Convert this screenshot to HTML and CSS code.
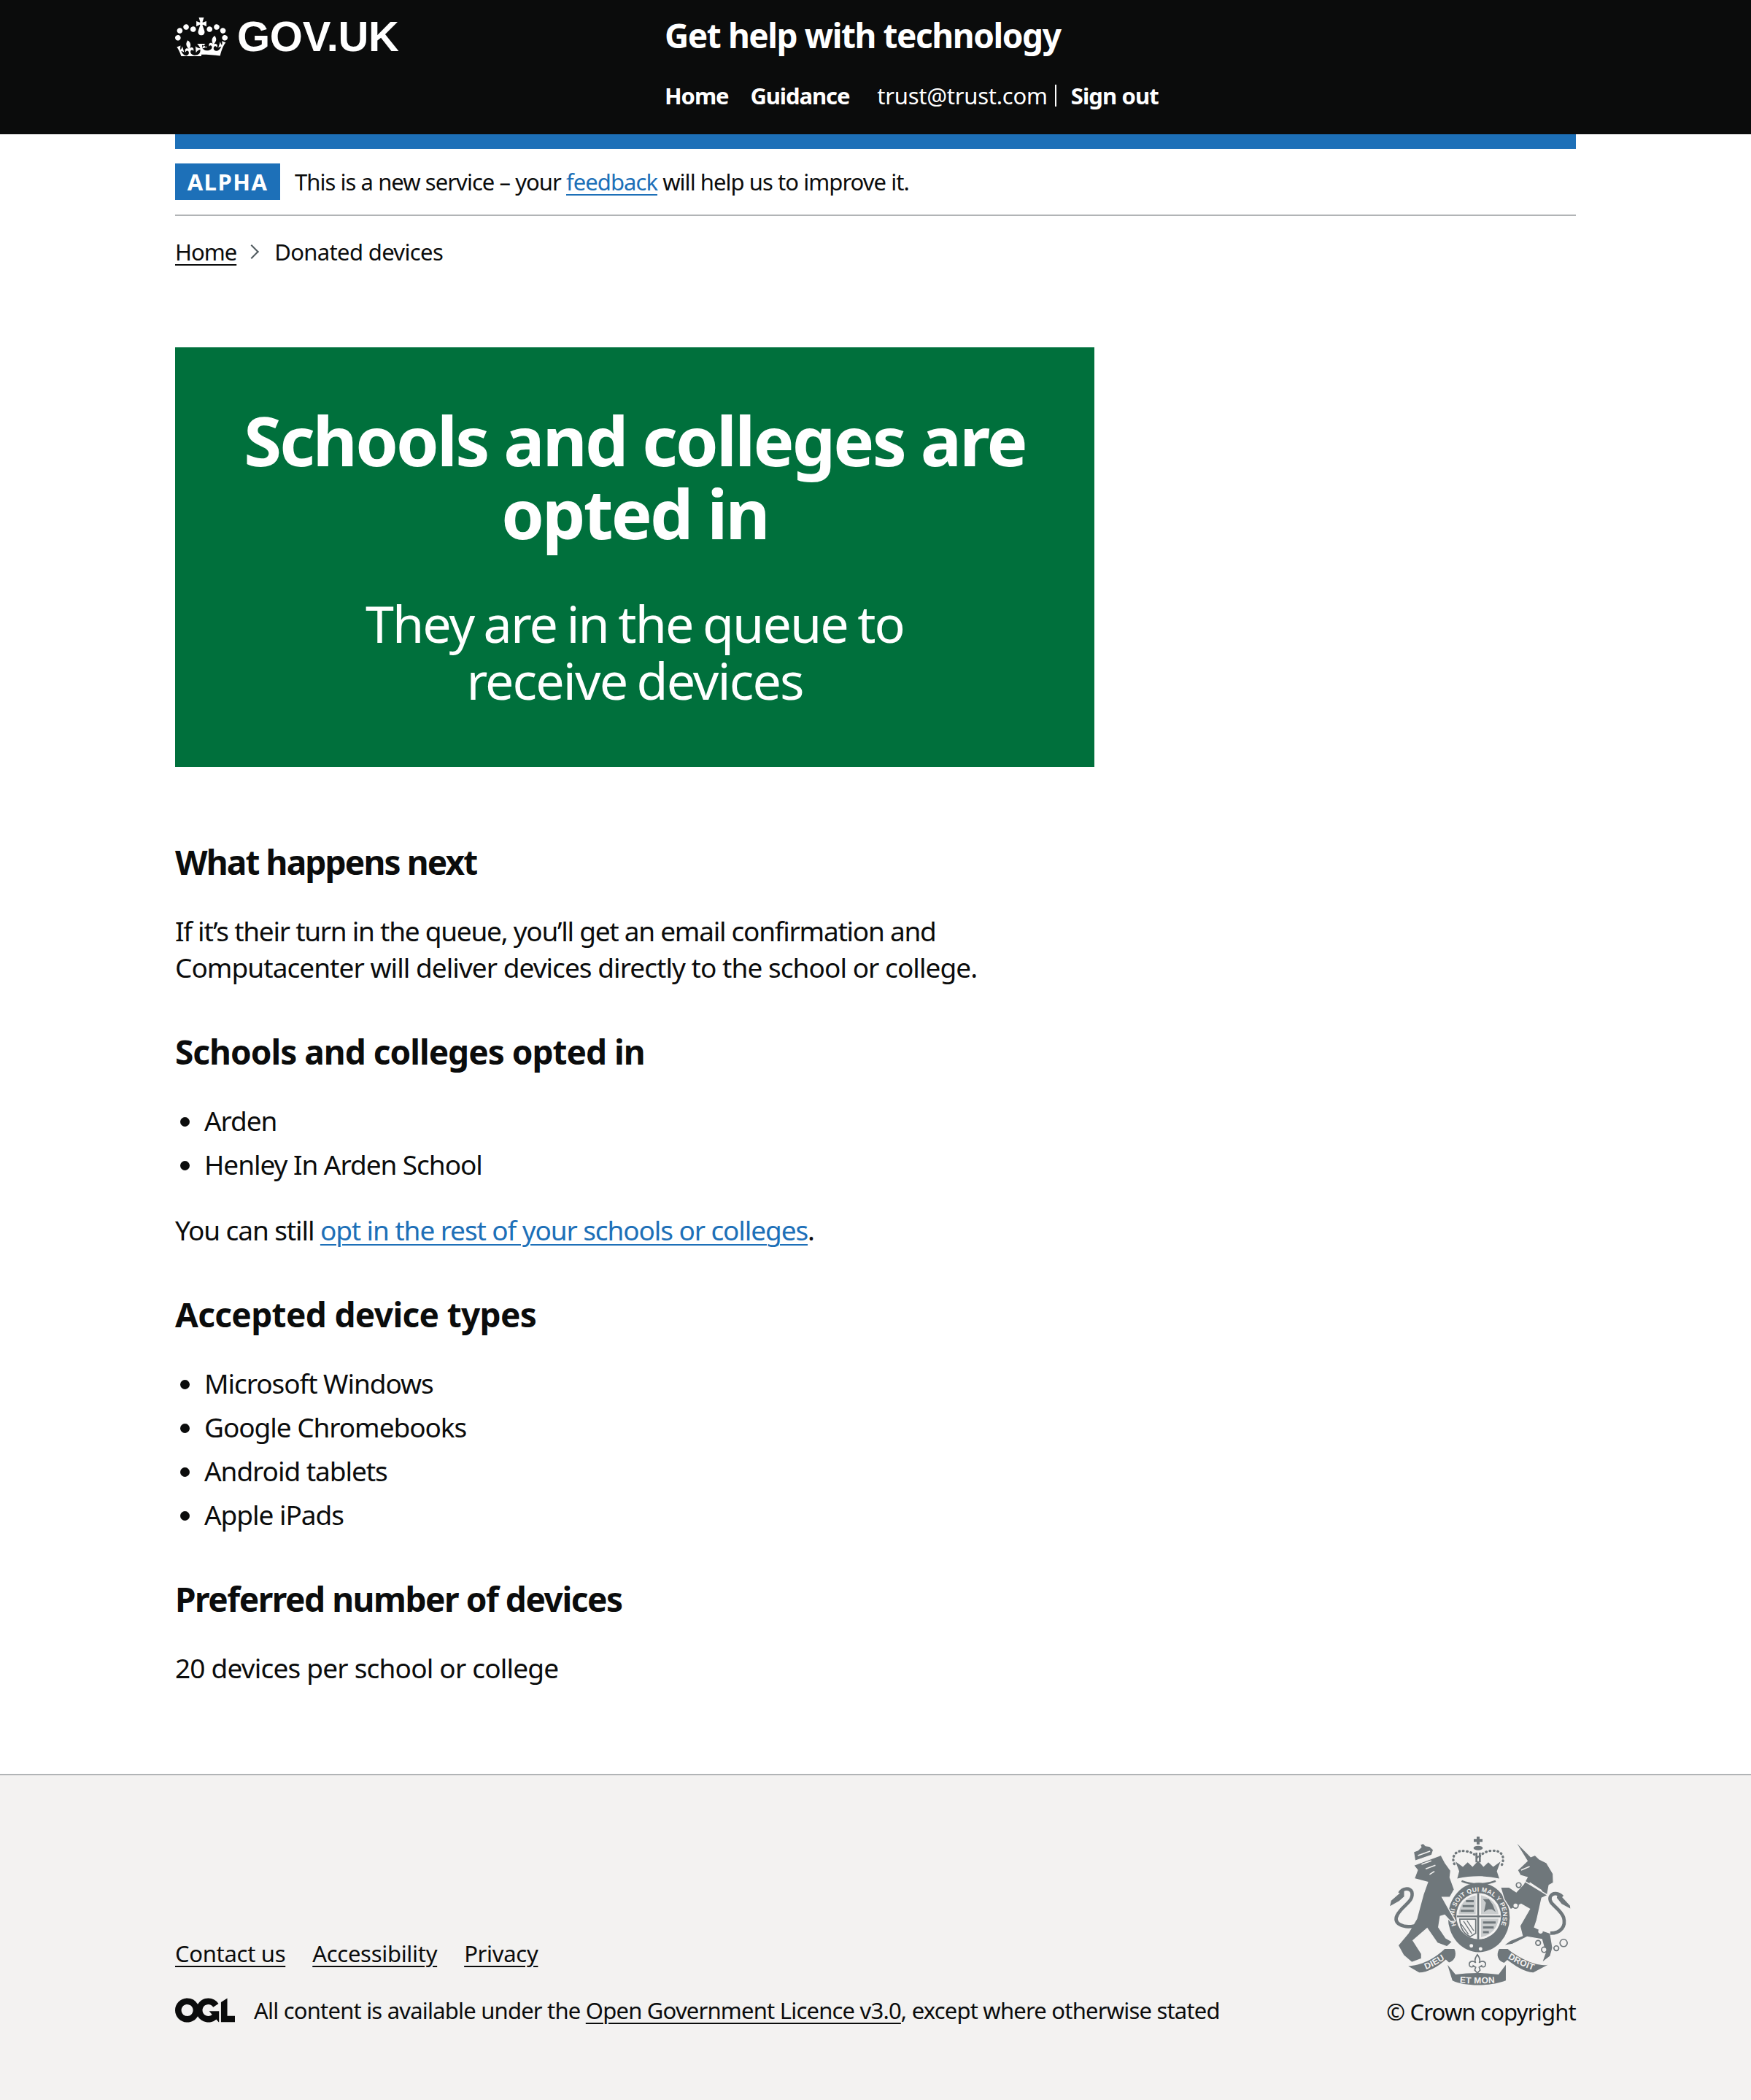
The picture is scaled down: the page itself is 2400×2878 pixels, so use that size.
FILE: index.html
```html
<!DOCTYPE html>
<html lang="en">
<head>
<meta charset="utf-8">
<title>Donated devices - Get help with technology</title>
<link rel="stylesheet" href="styles.css">
</head>
<body>
<header class="site-header">
  <div class="container header-inner">
    <a class="logo" href="#">
      <svg class="crown" viewBox="0 0 132 97" aria-hidden="true"><path fill="currentColor" d="M25 30.2c3.5 1.5 7.7-.2 9.1-3.7 1.5-3.6-.2-7.8-3.9-9.2-3.6-1.4-7.6.3-9.1 3.9-1.4 3.5.3 7.5 3.9 9zM9 39.5c3.6 1.5 7.8-.2 9.2-3.7 1.5-3.6-.2-7.8-3.9-9.1-3.6-1.5-7.6.2-9.1 3.8-1.4 3.5.3 7.5 3.8 9zM4.4 57.2c3.5 1.5 7.7-.2 9.1-3.8 1.5-3.6-.2-7.7-3.9-9.1-3.5-1.5-7.6.3-9.1 3.8-1.4 3.5.3 7.6 3.9 9.1zm38.3-21.4c3.5 1.5 7.7-.2 9.1-3.8 1.5-3.6-.2-7.7-3.9-9.1-3.6-1.5-7.6.3-9.1 3.8-1.3 3.6.4 7.7 3.9 9.1zm64.4-5.6c-3.6 1.5-7.8-.2-9.1-3.7-1.5-3.6.2-7.8 3.8-9.2 3.6-1.4 7.7.3 9.2 3.9 1.3 3.5-.4 7.5-3.9 9zm15.9 9.3c-3.6 1.5-7.7-.2-9.1-3.7-1.5-3.6.2-7.8 3.7-9.1 3.6-1.5 7.7.2 9.2 3.8 1.5 3.5-.3 7.5-3.8 9zm4.7 17.7c-3.6 1.5-7.8-.2-9.2-3.8-1.5-3.6.2-7.7 3.9-9.1 3.6-1.5 7.7.3 9.2 3.8 1.3 3.5-.4 7.6-3.9 9.1zM89.3 35.8c-3.6 1.5-7.8-.2-9.2-3.8-1.4-3.6.2-7.7 3.9-9.1 3.6-1.5 7.7.3 9.2 3.8 1.4 3.6-.3 7.7-3.9 9.1zM69.7 17.7l8.9 4.7V9.3l-8.9 2.8c-.2-.3-.5-.6-.9-.9L72.4 0H59.6l3.5 11.2c-.3.3-.6.5-.9.9l-8.8-2.8v13.1l8.8-4.7c.3.3.6.7.9.9l-5 15.4v.1c-.2.8-.4 1.6-.4 2.4 0 4.1 3.1 7.5 7 8.1h.2c.3 0 .7.1 1 .1.4 0 .7 0 1-.1h.2c4-.6 7.1-4.1 7.1-8.1 0-.8-.1-1.7-.4-2.4V34l-5.1-15.4c.4-.2.7-.6 1-.9zM66 92.8c16.9 0 32.8 1.1 47.1 3.2 4-16.9 8.9-26.7 14-33.5l-9.6-3.4c1 4.9 1.1 7.2 0 10.2-1.5-1.4-3-4.3-4.2-8.7L108.6 76c2.8-2 5-3.2 7.5-3.3-4.4 9.4-10 11.9-13.6 11.2-4.3-.8-6.3-4.6-5.6-7.9 1-4.7 5.7-5.9 8-.5 4.3-8.7-3-11.4-7.6-8.8 7.1-7.2 7.9-13.5 2.1-21.1-8 6.1-8.1 12.3-4.5 20.8-4.7-5.4-12.1-2.5-9.5 6.2 3.4-5.2 7.9-2 7.2 3.1-.6 4.3-6.4 7.8-13.5 7.2-10.3-.9-10.9-8-11.2-13.8 2.5-.5 7 1.8 11 7.7L80.2 72c-4.2 4.4-8 5.3-12.3 5.4 1.4-4.4 8-11.6 8-11.6H55.5s6.4 7.2 7.9 11.6c-4.2-.1-8-1-12.3-5.4l1.4 16.4c4-5.9 8.5-8.2 11-7.7-.3 5.9-.9 12.9-11.2 13.8-7.2.6-12.9-2.9-13.5-7.2-.7-5 3.8-8.3 7.1-3.1 2.7-8.7-4.6-11.6-9.4-6.2 3.7-8.5 3.6-14.7-4.6-20.8-5.8 7.6-5 13.9 2.2 21.1-4.7-2.6-11.9.1-7.7 8.8 2.3-5.5 7.1-4.2 8.1.5.7 3.3-1.3 7.1-5.7 7.9-3.5.7-9-1.8-13.5-11.2 2.5.1 4.7 1.3 7.5 3.3l-4.7-15.4c-1.2 4.4-2.7 7.2-4.3 8.7-1.1-3-.9-5.3 0-10.2l-9.5 3.4c5 6.9 9.9 16.7 14 33.5 14.8-2.1 30.8-3.2 47.7-3.2z"/></svg>
      <span class="logo-text">GOV.UK</span>
    </a>
    <div class="header-content">
      <a class="service-name" href="#">Get help with technology</a>
      <nav class="header-nav">
        <a class="nav-link nav-home" href="#">Home</a>
        <a class="nav-link" href="#">Guidance</a>
        <span class="nav-user">trust@trust.com</span>
        <a class="nav-link nav-signout" href="#">Sign out</a>
      </nav>
    </div>
  </div>
</header>
<div class="container">
  <div class="blue-bar"></div>
  <div class="phase">
    <strong class="phase-tag">ALPHA</strong>
    <span class="phase-text">This is a new service – your <a class="link" href="#">feedback</a> will help us to improve it.</span>
  </div>
  <nav class="breadcrumbs">
    <a class="crumb-link" href="#">Home</a>
    <span class="chevron"></span>
    <span class="crumb-current">Donated devices</span>
  </nav>
  <main class="main">
    <section class="panel">
      <h1 class="panel-title">Schools and colleges are opted in</h1>
      <div class="panel-body">They are in the queue to<br>receive devices</div>
    </section>
    <h2 class="heading heading-next">What happens next</h2>
    <p class="body"><span class="line-a">If it’s their turn in the queue, you’ll get an email confirmation and</span><br><span class="line-b">Computacenter will deliver devices directly to the school or college.</span></p>
    <h2 class="heading heading-gap heading-schools">Schools and colleges opted in</h2>
    <ul class="list">
      <li>Arden</li>
      <li>Henley In Arden School</li>
    </ul>
    <p class="body">You can still <a class="link" href="#">opt in the rest of your schools or colleges</a>.</p>
    <h2 class="heading heading-gap heading-types">Accepted device types</h2>
    <ul class="list">
      <li>Microsoft Windows</li>
      <li>Google Chromebooks</li>
      <li>Android tablets</li>
      <li>Apple iPads</li>
    </ul>
    <h2 class="heading heading-gap heading-number">Preferred number of devices</h2>
    <p class="body body-wide">20 devices per school or college</p>
  </main>
</div>
<footer class="footer">
  <div class="container footer-inner">
    <div class="footer-left">
      <ul class="footer-links">
        <li><a class="footer-link" href="#">Contact us</a></li>
        <li><a class="footer-link" href="#">Accessibility</a></li>
        <li><a class="footer-link" href="#">Privacy</a></li>
      </ul>
      <div class="licence">
        <svg class="ogl" viewBox="0 0 483.2 195.7" aria-hidden="true"><path fill="currentColor" d="M421.5 142.8V.1l-50.7 32.3v161.1h112.4v-50.7zm-122.3-9.6A47.12 47.12 0 0 1 221 97.8c0-26 21.1-47.1 47.1-47.1 16.7 0 31.4 8.7 39.7 21.8l42.7-27.2A97.63 97.63 0 0 0 268.1 0c-36.5 0-68.3 20.1-85.1 49.7A98 98 0 0 0 97.8 0C43.9 0 0 43.9 0 97.8s43.9 97.8 97.8 97.8c36.5 0 68.3-20.1 85.1-49.7a97.76 97.76 0 0 0 149.6 25.4l19.4 22.2h3v-87.8h-80l24.3 27.5zM97.8 145c-26 0-47.1-21.1-47.1-47.1s21.1-47.1 47.1-47.1 47.2 21 47.2 47S123.8 145 97.8 145"/></svg>
        <span class="licence-text">All content is available under the <a class="footer-link" href="#">Open Government Licence v3.0</a>, except where otherwise stated</span>
      </div>
    </div>
    <div class="footer-right">
      <svg class="arms" viewBox="60 60 780 640" aria-hidden="true">
        <defs>
          <path id="garter" d="M369 469 A100 100 0 1 1 511 469"/>
          <path id="rib-l" d="M208 625 Q265 605 315 566"/>
          <path id="rib-c" d="M345 672 Q435 682 525 672"/>
          <path id="rib-r" d="M553 568 Q610 605 672 625"/>
        </defs>
        <g class="arms-fill">
          <ellipse cx="441" cy="405" rx="127" ry="143"/>
          <path d="M150 605 C200 605 260 575 300 535 L340 535 C352 560 340 585 318 590 L305 578 C270 610 230 630 195 632 Z"/>
          <path d="M312 600 L345 640 C400 632 470 632 522 640 L552 600 L552 665 C490 690 380 690 332 665 Z"/>
          <path d="M725 600 C680 610 600 570 560 535 L525 535 C510 560 520 585 545 592 L558 580 C590 605 630 630 665 632 Z"/>
          <!-- centre crown -->
          <path d="M432 72 H444 V82 H456 V94 H444 V104 H432 V94 H420 V82 H432 Z"/>
          <ellipse cx="438" cy="119" rx="19" ry="9"/>
          <path d="M427 138 H435 V178 H427 Z M441 138 H449 V178 H441 Z"/>
          <path d="M360 215 L345 175 L375 197 L395 178 L415 197 L438 172 L460 197 L480 178 L500 197 L530 175 L515 215 L525 245 C470 232 410 232 352 245 Z"/>
          <path class="arms-dots" d="M340 185 C325 150 350 125 385 132 C410 135 425 145 438 160 C450 145 470 130 500 130 C535 130 550 155 535 190"/>
          <path class="arms-line-thin" d="M370 255 C410 272 470 272 510 255"/>
        </g>
        <text class="arms-text arms-garter"><textPath href="#garter" startOffset="50%">HONI SOIT QUI MAL Y PENSE</textPath></text>
        <ellipse class="arms-shield" cx="440" cy="400" rx="92" ry="95"/>
        <path class="arms-hatch" d="M428 314 V392 H358 C360 350 390 322 428 314 Z M450 314 C490 322 518 350 522 392 H450 Z M450 410 H522 C518 450 490 478 450 486 Z"/>
        <rect class="arms-fill" x="434" y="305" width="8" height="190"/>
        <rect class="arms-fill" x="350" y="397" width="180" height="7"/>
        <path class="arms-bars" d="M388 338 H420 M374 358 H420 M366 378 H420 M458 426 H510 M458 446 H502 M458 466 H482"/>
        <path class="arms-fill" d="M462 382 L470 345 L458 330 L482 330 L498 352 L510 382 L495 372 L480 372 Z"/>
        <path class="arms-hollow" d="M362 412 H428 V470 L405 484 C380 474 365 450 362 412 Z"/>
        <path class="arms-strings" d="M378 420 L412 472 M392 418 L420 460 M368 432 L398 474"/>
        <g class="arms-beast">
          <!-- lion -->
          <path d="M178 172 L172 135 L190 128 L203 115 L199 105 L212 100 L222 110 L238 112 L254 126 L247 148 Z"/>
          <path d="M172 190 L285 148 L302 180 L325 212 L322 240 L340 290 L322 322 L290 322 L345 420 L325 422 L300 395 L282 400 L275 445 L305 490 L332 505 L310 525 L270 510 L228 450 L170 500 L205 555 L205 575 L165 590 L130 560 L108 520 L150 470 L185 410 L212 310 L230 260 L175 245 L188 210 Z"/>
          <path d="M135 285 L78 335 L72 362 L112 340 L135 320 Z"/>
          <!-- unicorn -->
          <path d="M588 88 L655 155 L672 148 L690 165 L720 180 L747 225 L748 262 L730 272 L722 315 L700 325 L680 415 L670 445 L690 455 L735 470 L745 530 L735 565 L700 592 L715 550 L700 495 L640 485 L580 515 L540 522 L570 500 L620 480 L610 440 L650 370 L615 350 L572 372 L545 330 L530 280 L565 280 L595 300 L625 268 L640 240 L612 232 L600 210 L640 172 Z"/>
          <path d="M765 298 L818 355 L820 372 L780 350 L760 325 Z"/>
        </g>
        <g class="arms-lines">
          <path d="M175 440 C130 450 85 430 105 395 C125 355 175 340 165 300 C155 280 125 285 115 305"/>
          <path d="M735 470 C780 470 800 440 790 405 C775 365 725 350 735 320 C745 300 770 305 785 320"/>
        </g>
        <g class="arms-cut">
          <path d="M205 186 L245 172 M222 205 L262 190 M238 228 L258 215 M190 150 L240 132"/>
          <path d="M628 255 L722 312 M615 210 L650 195 M650 262 L700 295"/>
          <circle cx="725" cy="380" r="7"/>
          <circle cx="718" cy="425" r="7"/>
          <circle cx="695" cy="462" r="7"/>
          <circle cx="410" cy="522" r="5"/>
          <circle cx="448" cy="535" r="5"/>
        </g>
        <g class="arms-rings">
          <circle cx="605" cy="272" r="10"/>
          <circle cx="592" cy="356" r="11"/>
          <circle cx="685" cy="510" r="10"/>
          <circle cx="710" cy="538" r="11"/>
          <circle cx="760" cy="532" r="10"/>
          <circle cx="790" cy="510" r="15"/>
        </g>
        <path class="arms-fleur" d="M435 558 C448 575 446 585 442 592 C452 580 472 585 468 602 C465 612 452 610 452 604 L442 610 L446 622 L435 634 L424 622 L428 610 L418 604 C418 610 405 612 402 602 C398 585 418 580 428 592 C424 585 422 575 435 558 Z"/>
        <text class="arms-text arms-motto"><textPath href="#rib-l" startOffset="50%">DIEU</textPath></text>
        <text class="arms-text arms-motto"><textPath href="#rib-c" startOffset="50%">ET MON</textPath></text>
        <text class="arms-text arms-motto"><textPath href="#rib-r" startOffset="50%">DROIT</textPath></text>
      </svg>
      <a class="footer-link copyright" href="#">© Crown copyright</a>
    </div>
  </div>
</footer>
</body>
</html>
```
FILE: styles.css
```css
* { box-sizing: border-box; }
html, body { margin: 0; padding: 0; }
body {
  font-family: "Noto Sans", Arial, sans-serif;
  color: #0b0c0c;
  background: #fff;
}
.container { width: 1920px; margin: 0 auto; }

/* header */
.site-header { background: #0b0c0c; height: 184px; color: #fff; }
.header-inner { display: flex; align-items: flex-start; }
.logo {
  display: flex; align-items: flex-start; width: 671px;
  color: #fff; text-decoration: none; padding-top: 24px;
}
.crown { width: 72px; height: 53px; flex: none; }
.logo-text {
  font: 700 58px/60px "Liberation Sans", Arial, sans-serif;
  letter-spacing: -0.3px; margin: -4px 0 0 13px;
}
.header-content { padding-top: 22px; }
.service-name {
  display: block; color: #fff; text-decoration: none;
  font-size: 46px; line-height: 52px; font-weight: 700; letter-spacing: -1.45px;
}
.header-nav { display: flex; align-items: center; margin-top: 32px; font-size: 31px; line-height: 50px; }
.nav-link { color: #fff; text-decoration: none; font-weight: 700; letter-spacing: -1.1px; margin-right: 32px; }
.nav-home { margin-right: 30px; }
.nav-user { font-weight: 400; color: #fff; letter-spacing: -.25px; padding-right: 10px; margin-left: 6px; border-right: 2px solid #fff; line-height: 30px; }
.nav-signout { margin: 0 0 0 20px; letter-spacing: -.9px; }

/* phase banner */
.blue-bar { height: 20px; background: #1d70b8; }
.phase { display: flex; align-items: center; height: 92px; border-bottom: 2px solid #b1b4b6; }
.phase-tag {
  display: block; width: 144px; height: 50px; background: #1d70b8; color: #fff;
  font-size: 31px; line-height: 50px; font-weight: 700; letter-spacing: 1.5px; text-align: center;
}
.phase-text { margin-left: 20px; font-size: 31px; letter-spacing: -.95px; }
.link { color: #1d70b8; text-decoration: underline; text-decoration-thickness: 2px; text-underline-offset: 5px; }

/* breadcrumbs */
.breadcrumbs { display: flex; align-items: center; height: 50px; margin-top: 24px; font-size: 31px; letter-spacing: -.8px; }
.crumb-link { color: #0b0c0c; text-decoration: underline; text-decoration-thickness: 2px; text-underline-offset: 5px; letter-spacing: -1px; }
.chevron {
  width: 14px; height: 14px; margin: 0 24px 0 14px;
  border-top: 2px solid #505a5f; border-right: 2px solid #505a5f;
  transform: rotate(45deg);
}
.crumb-current { letter-spacing: -.65px; }

/* main */
.main { padding-top: 106px; padding-bottom: 80px; }
.panel {
  width: 1260px; height: 575px; padding: 77px 80px 0; margin-bottom: 100px;
  background: #00703c; color: #fff; text-align: center;
}
.panel-title { margin: 0 0 62px; font-size: 94px; line-height: 100px; font-weight: 700; letter-spacing: -2.8px; }
.panel-body { font-size: 70px; line-height: 78px; letter-spacing: -1.9px; word-spacing: -3px; }
.heading { margin: 0 0 40px; font-size: 46px; line-height: 60px; font-weight: 700; }
.heading-next { letter-spacing: -1.85px; }
.heading-schools { letter-spacing: -1px; }
.heading-types { letter-spacing: -.65px; }
.heading-number { letter-spacing: -1.45px; }
.heading-gap { padding-top: 20px; }
.body { margin: 0 0 40px; font-size: 37px; line-height: 50px; letter-spacing: -1.1px; }
.line-a { letter-spacing: -1.26px; }
.line-b { letter-spacing: -.95px; }
.body-wide { letter-spacing: -.8px; }
.list { margin: 0 0 40px; padding: 0 0 0 40px; font-size: 37px; line-height: 50px; letter-spacing: -1.05px; }
.list li + li { margin-top: 10px; }

/* footer */
.footer { background: #f3f2f1; border-top: 2px solid #b1b4b6; height: 447px; padding-top: 80px; }
.footer-inner { display: flex; justify-content: space-between; align-items: flex-start; }
.footer-left { padding-top: 141px; font-size: 31px; letter-spacing: -.8px; }
.footer-links { display: flex; gap: 37px; list-style: none; margin: 0 0 32px; padding: 0; line-height: 46px; letter-spacing: -.3px; }
.footer-link { color: #0b0c0c; text-decoration: underline; text-decoration-thickness: 2px; text-underline-offset: 5px; }
.licence { display: flex; align-items: center; height: 46px; }
.ogl { width: 82px; height: 34px; margin-right: 26px; flex: none; }
.footer-right { display: flex; flex-direction: column; align-items: flex-end; font-size: 31px; letter-spacing: -.8px; }
.arms { width: 260px; height: 213px; margin-bottom: 8px; display: block; }
.copyright { text-decoration: none; line-height: 46px; }
.arms-fill { fill: #6f777b; }
.arms-beast { fill: #6f777b; stroke: #f3f2f1; stroke-width: 4; }
.arms-lines { fill: none; stroke: #6f777b; stroke-width: 14; }
.arms-line-thin { fill: none; stroke: #6f777b; stroke-width: 8; }
.arms-dots { fill: none; stroke: #6f777b; stroke-width: 10; stroke-dasharray: 2 14; stroke-linecap: round; }
.arms-cut { fill: #f3f2f1; stroke: #f3f2f1; stroke-width: 5; }
.arms-cut path { fill: none; }
.arms-rings { fill: #f3f2f1; stroke: #6f777b; stroke-width: 5; }
.arms-fleur { fill: #f3f2f1; stroke: #6f777b; stroke-width: 5; }
.arms-hollow { fill: #f3f2f1; stroke: #6f777b; stroke-width: 5; }
.arms-strings { fill: none; stroke: #6f777b; stroke-width: 4; }
.arms-hatch { fill: #c9cccd; }
.arms-bars { fill: none; stroke: #6f777b; stroke-width: 9; }
.arms-shield { fill: #f3f2f1; }
.arms-text { fill: #f3f2f1; font-family: "Liberation Sans", Arial, sans-serif; font-weight: 700; text-anchor: middle; letter-spacing: 1px; }
.arms-garter { font-size: 26px; }
.arms-motto { font-size: 36px; }
```
